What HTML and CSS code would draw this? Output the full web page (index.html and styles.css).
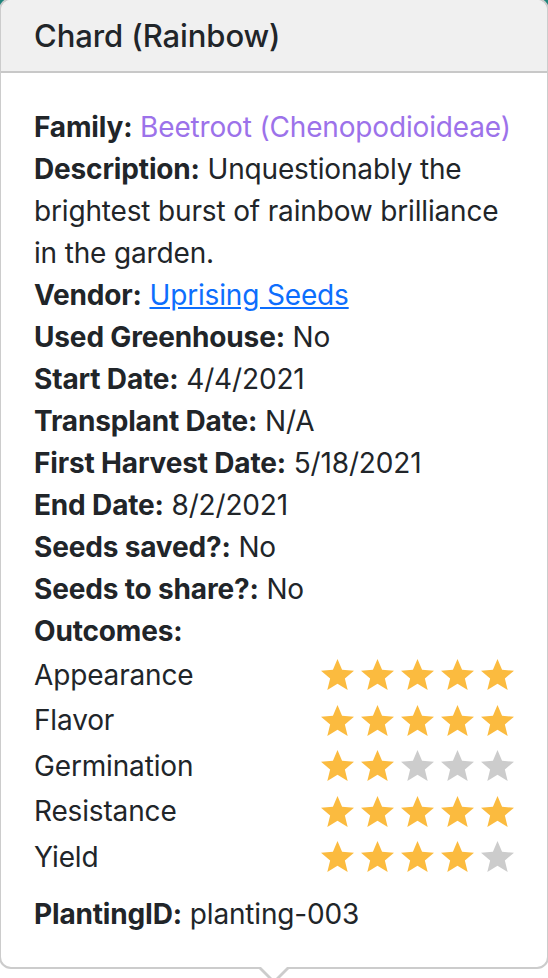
FILE: index.html
```html
<!DOCTYPE html>
<html lang="en">
<head>
<meta charset="utf-8">
<title>Chard (Rainbow)</title>
<link rel="stylesheet" href="styles.css">
</head>
<body>
<div class="popover">
  <h3 class="popover-header">Chard (Rainbow)</h3>
  <div class="popover-body">
    <div class="line"><b>Family:</b> <span class="family">Beetroot (Chenopodioideae)</span></div>
    <div class="line"><b>Description:</b> Unquestionably the brightest burst of rainbow brilliance in the garden.</div>
    <div class="line"><b>Vendor:</b> <a href="#" class="link">Uprising Seeds</a></div>
    <div class="line"><b>Used Greenhouse:</b> No</div>
    <div class="line"><b>Start Date:</b> 4/4/2021</div>
    <div class="line"><b>Transplant Date:</b> N/A</div>
    <div class="line"><b>First Harvest Date:</b> 5/18/2021</div>
    <div class="line"><b>End Date:</b> 8/2/2021</div>
    <div class="line"><b>Seeds saved?:</b> No</div>
    <div class="line"><b>Seeds to share?:</b> No</div>
    <div class="line"><b>Outcomes:</b></div>
    <div class="outcomes">
      <div class="row"><span>Appearance</span><span class="stars" data-n="5"></span></div>
      <div class="row"><span>Flavor</span><span class="stars" data-n="5"></span></div>
      <div class="row"><span>Germination</span><span class="stars" data-n="2"></span></div>
      <div class="row"><span>Resistance</span><span class="stars" data-n="5"></span></div>
      <div class="row"><span>Yield</span><span class="stars" data-n="4"></span></div>
    </div>
    <div class="line id-line"><b>PlantingID:</b> planting-003</div>
  </div>
  <div class="arrow"></div>
</div>
<script src="app.js"></script>
</body>
</html>
```

FILE: app.js
```js
document.querySelectorAll('.stars').forEach(function (el) {
  var n = parseInt(el.getAttribute('data-n'), 10);
  var html = '';
  for (var i = 0; i < 5; i++) {
    html += '<svg class="star ' + (i < n ? 'on' : 'off') + '" viewBox="0.8 1.2 22.4 21.1" width="33" height="31" preserveAspectRatio="none">' +
      '<polygon points="12,1.2 15.1,8.6 23.2,9.2 17,14.4 18.9,22.3 12,18 5.1,22.3 7,14.4 0.8,9.2 8.9,8.6"/></svg>';
  }
  el.innerHTML = html;
});
```

FILE: styles.css
```css
html, body {
  margin: 0;
  padding: 0;
}
body {
  width: 548px;
  height: 978px;
  overflow: hidden;
  background: linear-gradient(#1e837a 0, #1e837a 30px, #ffffff 30px);
  font-family: Inter, "Noto Sans", sans-serif;
  color: #212529;
  font-size: 28px;
  line-height: 42px;
  letter-spacing: -0.16px;
}
.popover {
  position: relative;
  margin: -2px 0 0 -1px;
  width: 550px;
  box-sizing: border-box;
  background: #fff;
  border: 2px solid #cccccc;
  border-radius: 12px;
}
.popover-header {
  margin: 0;
  padding: 16px 33px;
  line-height: 39px;
  font-size: 31px;
  font-weight: 500;
  letter-spacing: -0.1px;
  background: #f0f0f0;
  border-bottom: 2px solid #c8c8c8;
  border-radius: 10px 10px 0 0;
}
.popover-body {
  padding: 33px 33px 32px 33px;
}
.line b {
  font-weight: 700;
}
.family {
  color: #9c72ea;
}
.link {
  color: #0d6efd;
  text-decoration: underline;
}
.outcomes {
  display: flex;
  flex-direction: column;
  margin-bottom: 13.5px;
}
.row {
  display: flex;
  align-items: center;
  justify-content: space-between;
  height: 45.5px;
}
.stars {
  display: flex;
  gap: 7px;
}
.star {
  display: block;
}
.star.on {
  fill: #fbbb3f;
}
.star.off {
  fill: #cccccc;
}
.arrow {
  position: absolute;
  left: 50%;
  bottom: -17px;
  margin-left: -16px;
  width: 0;
  height: 0;
  border-left: 16px solid transparent;
  border-right: 16px solid transparent;
  border-top: 16px solid #cccccc;
}
.arrow::after {
  content: "";
  position: absolute;
  left: -14px;
  top: -18px;
  border-left: 14px solid transparent;
  border-right: 14px solid transparent;
  border-top: 14px solid #ffffff;
}
```
